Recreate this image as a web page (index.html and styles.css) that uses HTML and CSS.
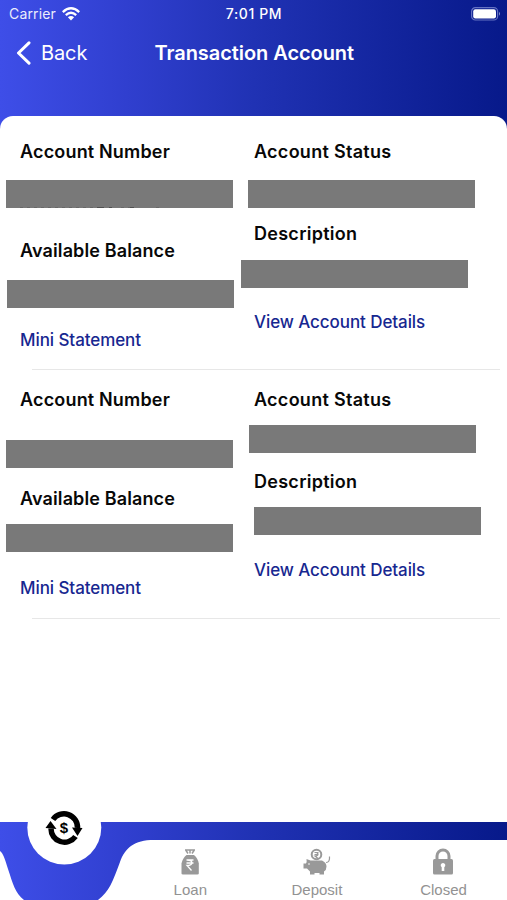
FILE: index.html
```html
<!DOCTYPE html>
<html lang="en">
<head>
<meta charset="utf-8">
<title>Transaction Account</title>
<link rel="stylesheet" href="styles.css">
</head>
<body>
<div class="screen">
  <header class="header">
    <div class="status">
      <div class="status-left"><span class="carrier">Carrier</span>
        <svg class="wifi" width="18" height="14" viewBox="0 0 18 14"><g fill="none" stroke="#fff" stroke-width="2.3"><path d="M.8 5.1Q9-2.5 17.2 5.1"/><path d="M3.8 8.2Q9 3.4 14.2 8.2"/></g><path fill="#fff" d="M5.9 10.2Q9 7.7 12.1 10.2L9 13.5z"/></svg>
      </div>
      <span class="time">7:01 PM</span>
      <svg class="battery" width="30" height="14" viewBox="0 0 30 14"><rect x=".6" y=".6" width="26" height="12.4" rx="3.8" fill="none" stroke="#6572c2" stroke-width="1.2"/><rect x="2.2" y="2.2" width="22.8" height="9.2" rx="2.2" fill="#fff"/><path d="M28 4.8q2 2 0 4z" fill="#8792d0"/></svg>
    </div>
    <nav class="nav">
      <a class="back"><svg width="16" height="24" viewBox="0 0 16 24"><path d="M14 1.8L3.500 12l10.500 10.200" fill="none" stroke="#fff" stroke-width="3" stroke-linecap="round" stroke-linejoin="round"/></svg><span>Back</span></a>
      <h1 class="title">Transaction Account</h1>
    </nav>
  </header>
  <main class="sheet">
    <section class="record">
      <div class="col col-left">
        <h2 class="label number">Account Number</h2>
        <div class="slot slot-number"><div class="mask mask-a"><svg class="residue" width="144" height="1" viewBox="0 0 144 1"><path d="M0 .5H76M101 .5H115M136 .5H143" stroke="#686868" stroke-dasharray="3 4"/><path d="M77 .5H84M89 .5H92M110 .5H114" stroke="#505050"/></svg></div></div>
        <h2 class="label balance">Available Balance</h2>
        <div class="slot slot-balance"><div class="mask mask-b"></div></div>
        <a class="link mini">Mini Statement</a>
      </div>
      <div class="col col-right">
        <h2 class="label state">Account Status</h2>
        <div class="slot slot-status"><div class="mask mask-c"></div></div>
        <h2 class="label desc">Description</h2>
        <div class="slot slot-desc"><div class="mask mask-d"></div></div>
        <a class="link details">View Account Details</a>
      </div>
    </section>
    <section class="record">
      <div class="col col-left">
        <h2 class="label number">Account Number</h2>
        <div class="slot slot-number"><div class="mask mask-e"></div></div>
        <h2 class="label balance">Available Balance</h2>
        <div class="slot slot-balance"><div class="mask mask-f"></div></div>
        <a class="link mini">Mini Statement</a>
      </div>
      <div class="col col-right">
        <h2 class="label state">Account Status</h2>
        <div class="slot slot-status"><div class="mask mask-g"></div></div>
        <h2 class="label desc">Description</h2>
        <div class="slot slot-desc"><div class="mask mask-h"></div></div>
        <a class="link details">View Account Details</a>
      </div>
    </section>
  </main>
  <footer class="tabbar">
    <svg class="wave" width="507" height="110" viewBox="0 790 507 110">
      <defs><linearGradient id="blue"><stop offset="0" stop-color="#3e4ee8"/><stop offset=".25" stop-color="#303fcf"/><stop offset=".5" stop-color="#2032b4"/><stop offset="1" stop-color="#07198a"/></linearGradient></defs>
      <path fill="url(#blue)" d="M0 822H507V840H154C134 840 125 848 120 862C113 881 109 892 98 900H24C15 893 13 884 8 869C5 859 3 853 0 851Z"/>
      <circle cx="64.300" cy="827.500" r="37" fill="#fff"/>
      <g fill="none" stroke="#000" stroke-width="5.500"><path d="M53 819.500A13.500 13.500 0 0 1 77.500 828"/><path d="M75.500 836.500A13.500 13.500 0 0 1 51 828.500"/></g>
      <path d="M72 827.500L82.500 828L77.500 836zM45.500 828L50.500 821L56.500 829z"/>
      <text x="64" y="833" text-anchor="middle" class="coin">$</text>
    </svg>
    <div class="tabs">
      <a class="tab"><svg width="28" height="30" viewBox="0 0 28 30"><path d="M9 3h10M10 3.500l2 3M14 3.500v3M18 3.500l-2 3" fill="none" stroke="#999" stroke-width="1.500"/><path d="M10.500 8h7.500q4 3.500 4.800 8.500V26.500q0 1-1.500 1H7q-1.500 0-1.500-1V16.500q1-5 5-8.500z" fill="#999"/><path d="M10.500 13h7M10.500 16h7M11 13c6.500 0 6.500 5.500 0 5.500l4.500 5" fill="none" stroke="#fff" stroke-width="1.300"/></svg><span>Loan</span></a>
      <a class="tab"><svg width="28" height="30" viewBox="0 0 28 30"><path d="M3.500 12l4 1.500H19q4.500 2 4.500 6 0 3.500-2.500 5v3h-4.500v-1.500h-5v1.500H7V24.500L4 21.500H.500V16.500h2.500q1-1.500.5-4.500z" fill="#999"/><circle cx="13.500" cy="7.500" r="4.800" fill="#fff" stroke="#999" stroke-width="2"/><path d="M11.500 5.500h4M11.500 7.500h4M12 5.500c4 0 4 3.500 0 3.500l3 2.500M23 15.500q4 0 3.500-6" fill="none" stroke="#999" stroke-width="1.200"/><circle cx="6" cy="17" r=".8" fill="#fff"/></svg><span>Deposit</span></a>
      <a class="tab"><svg width="28" height="30" viewBox="0 0 28 30"><path d="M8 13V9a6 6 0 0 1 12 0v4" fill="none" stroke="#999" stroke-width="3"/><rect x="4" y="12" width="20" height="15.500" rx="1.500" fill="#999"/><path d="M14 16a2.300 2.300 0 0 1 1.300 4.200V24h-2.600v-3.800A2.300 2.300 0 0 1 14 16z" fill="#fff"/></svg><span>Closed</span></a>
    </div>
  </footer>
</div>
</body>
</html>
```
FILE: styles.css
```css
* { box-sizing: border-box; }
body { margin: 0; font-family: Inter, "Liberation Sans", sans-serif; }
.screen {
  width: 507px; height: 900px; display: flex; flex-direction: column; overflow: hidden;
  background: linear-gradient(90deg, #3e4ee8 0%, #303fcf 25%, #2032b4 50%, #07198a 100%);
  color: #fff;
}
.header { height: 116px; flex: none; }
.status {
  height: 28px; padding: 0 7px 0 9px;
  display: grid; grid-template-columns: 1fr auto 1fr; align-items: center;
}
.status-left { display: flex; align-items: center; gap: 6px; margin-top: -1px; }
.carrier { font-size: 14px; line-height: 18px; letter-spacing: .15px; opacity: .9; }
.time { font-size: 14px; font-weight: 500; letter-spacing: .6px; margin: -2px 1px 0 0; }
.battery { justify-self: end; margin: -1px -1px 0 0; }
.nav {
  height: 49px; padding-left: 15px;
  display: grid; grid-template-columns: 139.500px auto 1fr; align-items: center;
}
.back { display: flex; align-items: center; gap: 10px; font-size: 20px; letter-spacing: -.1px; }
.title { margin: 0; font-size: 20px; font-weight: 600; letter-spacing: -.06px; white-space: nowrap; }
.sheet { flex: 1; min-height: 0; background: #fff; border-radius: 13px 13px 0 0; padding-top: 6px; }
.record {
  height: 248.300px; padding: 20px 0 0 20px; display: grid; grid-template-columns: 234px 1fr; align-items: start;
  background: linear-gradient(#e7e7e7, #e7e7e7) 32px 100% / 468px 1px no-repeat;
}
.label, .link { display: block; margin: 0; height: 20px; line-height: 20px; font-size: 18px; white-space: nowrap; }
.label { color: #080808; font-weight: 600; letter-spacing: .17px; }
.balance { letter-spacing: .12px; }
.state { letter-spacing: .28px; }
.desc { letter-spacing: .28px; }
.link { color: #172790; font-weight: 500; font-size: 17px; letter-spacing: -.08px; }
.slot { display: flow-root; }
.slot-number { height: 79px; }
.slot-balance { height: 69px; }
.slot-status { height: 62px; }
.slot-desc { height: 68px; }
.mask { width: 227px; height: 28px; background: #797979; }
.mask-a { margin: 18px 0 0 -14px; display: flex; align-items: flex-end; padding-left: 14px; }
.mask-b { margin: 19px 0 0 -13px; }
.mask-c { margin: 18px 0 0 -6px; }
.mask-d { margin: 16px 0 0 -13px; }
.mask-e { margin: 30px 0 0 -14px; }
.mask-f { margin: 15px 0 0 -14px; }
.mask-g { margin: 15px 0 0 -5px; }
.mask-h { margin: 15px 0 0 0; }
.tabbar { height: 110px; flex: none; background: #fff; display: grid; }
.wave, .tabs { grid-area: 1 / 1; }
.tabs { padding: 57px 0 0 127px; display: grid; grid-template-columns: repeat(3, 126.600px); align-content: start; }
.tab { display: flex; flex-direction: column; align-items: center; gap: 4px; color: #929292; font: 15px/17px "Liberation Sans", sans-serif; }
.coin { font: 700 15px "Liberation Sans", sans-serif; fill: #000; }
```
